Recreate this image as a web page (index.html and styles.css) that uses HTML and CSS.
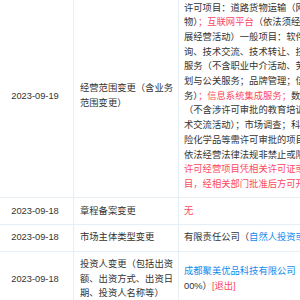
FILE: index.html
```html
<!DOCTYPE html>
<html lang="zh-CN">
<head>
<meta charset="utf-8">
<link rel="stylesheet" href="styles.css">
</head>
<body>
<div class="viewport">
<table class="changes">
  <colgroup>
    <col class="c-date">
    <col class="c-item">
    <col class="c-after">
  </colgroup>
  <tbody>
    <tr>
      <td class="date">2023-09-19</td>
      <td class="item">经营范围变更（含业务范围变更）</td>
      <td class="after">
        <div class="ln">许可项目：道路货物运输（网络货运）</div>
        <div class="ln">物）<span class="red">；互联网平台</span>（依法须经批准的项目</div>
        <div class="ln">展经营活动）一般项目：软件开发</div>
        <div class="ln">询、技术交流、技术转让、技术推广</div>
        <div class="ln">服务（不含职业中介活动、劳务派遣</div>
        <div class="ln">划与公关服务；品牌管理；信息咨询</div>
        <div class="ln">务）<span class="red">；信息系统集成服务；</span>数据处理</div>
        <div class="ln">（不含涉许可审批的教育培训活动</div>
        <div class="ln">术交流活动）；市场调查；科技中介</div>
        <div class="ln">险化学品等需许可审批的项目）</div>
        <div class="ln">依法经营法律法规非禁止或限制的项目</div>
        <div class="ln red">许可经营项目凭相关许可证或批准文件</div>
        <div class="ln red">目，经相关部门批准后方可开展经营</div>
      </td>
    </tr>
    <tr>
      <td class="date">2023-09-18</td>
      <td class="item">章程备案变更</td>
      <td class="after"><span class="red">无</span></td>
    </tr>
    <tr>
      <td class="date">2023-09-18</td>
      <td class="item">市场主体类型变更</td>
      <td class="after"><div class="ln">有限责任公司（<span class="blue">自然人投资或控股</span>）</div></td>
    </tr>
    <tr>
      <td class="date">2023-09-18</td>
      <td class="item">投资人变更（包括出资额、出资方式、出资日期、投资人名称等）</td>
      <td class="after">
        <div class="ln"><span class="blue">成都聚美优品科技有限公司</span>（出资比例：1</div>
        <div class="ln">00%）<span class="red">[退出]</span></div>
      </td>
    </tr>
  </tbody>
</table>
</div>
</body>
</html>
```

FILE: styles.css
```css
html, body {
  margin: 0;
  padding: 0;
  background: #fff;
  overflow: hidden;
}

.viewport {
  width: 300px;
  height: 300px;
  overflow: hidden;
}

.changes {
  border-collapse: collapse;
  table-layout: fixed;
  width: 580px;
  margin: -6px 0 0 -4px;
  font-family: "Liberation Sans", "Noto Sans CJK SC", sans-serif;
  font-size: 9.3px;
  line-height: 14.7px;
  color: #333;
}

.c-date { width: 77px; }
.c-item { width: 105px; }
.c-after { width: 398px; }

.changes td {
  border: 1px solid #e6eef6;
  padding: 5.5px 6px;
  vertical-align: middle;
}

.changes td.date {
  text-align: center;
  padding: 5.5px 4px;
}

.changes td.item {
  padding: 5.5px 2px 5.5px 6px;
}

.changes td.after {
  padding-left: 5px;
}

.ln {
  white-space: nowrap;
}

.red { color: #fd485e; }
.blue { color: #128bed; }
```
